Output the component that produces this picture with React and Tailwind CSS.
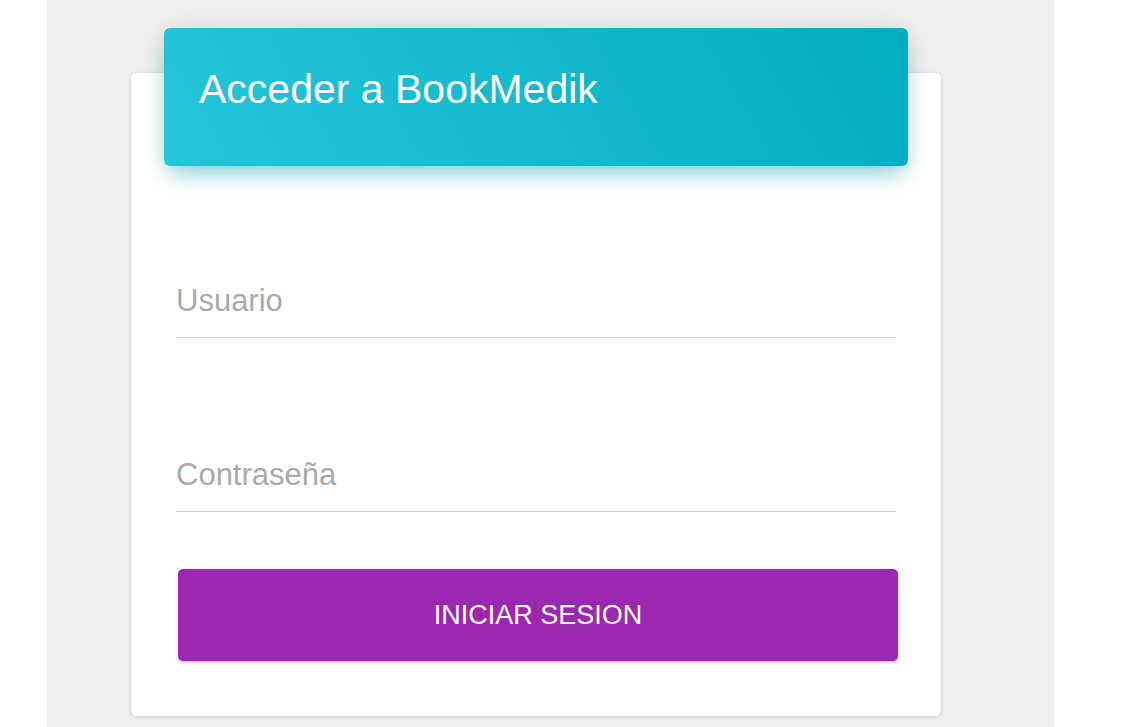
export default function App() {
  return (
    <div className="min-h-[727px] w-full bg-white" style={{ fontFamily: '"Liberation Sans", Arial, sans-serif' }}>
      <div className="ml-[47px] min-h-[727px] w-[1007px] bg-[#eeeeee] pt-[73px]">
        <div className="ml-[84px] flex w-[810px] flex-col rounded-[6px] bg-white px-[45px] pb-[55px] shadow-[0_1px_4px_0_rgba(0,0,0,0.14)]">
          <div className="-mx-[12px] -mt-[45px] flex h-[138px] items-start rounded-[6px] bg-[linear-gradient(60deg,#26c6da,#00acc1)] pl-[35px] pt-[41px] shadow-[0_4px_25px_0_rgba(0,0,0,0.12),0_14px_22px_-8px_rgba(0,188,212,0.45)]">
            <h1 className="text-[41px] font-normal leading-[40px] text-white">Acceder a BookMedik</h1>
          </div>

          <input
            type="text"
            placeholder="Usuario"
            className="mt-[118px] block h-[54px] w-full border-b border-[#d2d2d2] pb-[19px] text-[31px] leading-[34px] text-[#555] outline-none placeholder:text-[#aaaaaa]"
          />
          <input
            type="password"
            placeholder="Contraseña"
            className="mt-[120px] block h-[54px] w-full border-b border-[#d2d2d2] pb-[19px] text-[31px] leading-[34px] text-[#555] outline-none placeholder:text-[#aaaaaa]"
          />

          <button className="ml-[2px] mt-[57px] flex h-[92px] w-[720px] items-center justify-center rounded-[5px] bg-[#9c27b0] text-[27px] uppercase text-white shadow-[0_2px_2px_0_rgba(156,39,176,0.14),0_3px_1px_-2px_rgba(156,39,176,0.2),0_1px_5px_0_rgba(156,39,176,0.12)]">
            Iniciar Sesion
          </button>
        </div>
      </div>
    </div>
  )
}
